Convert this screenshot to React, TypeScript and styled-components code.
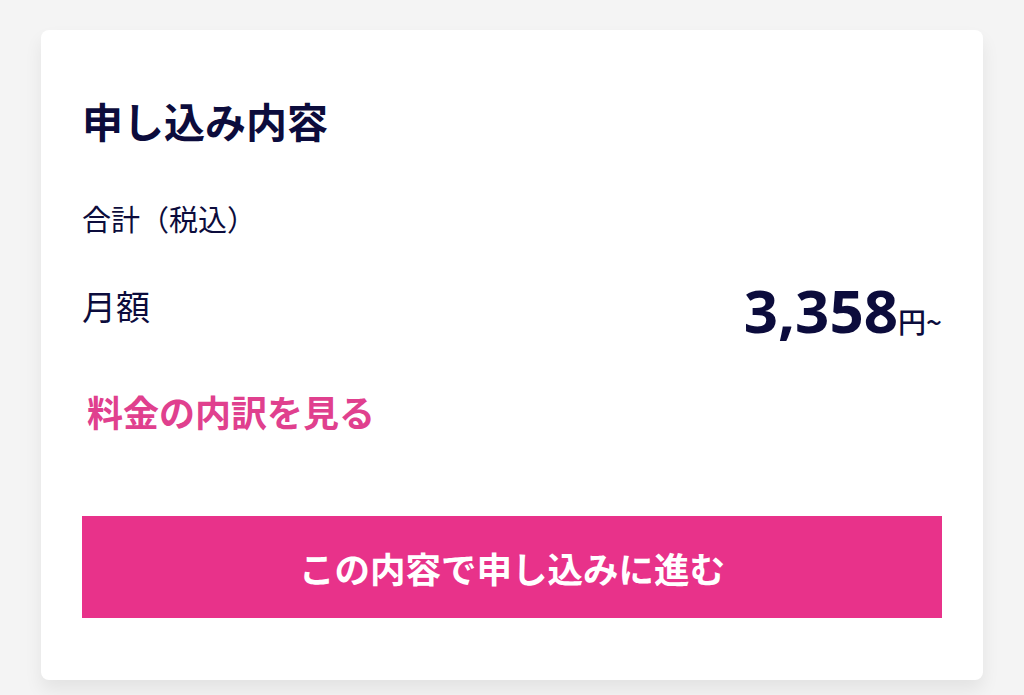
import styled, { createGlobalStyle } from "styled-components";

const GlobalStyle = createGlobalStyle`
  html, body {
    margin: 0;
    padding: 0;
    background: #f4f4f4;
  }
  body {
    font-family: "Noto Sans CJK JP", "Noto Sans", sans-serif;
    color: #0c0c3c;
  }
`;

const Page = styled.div`
  padding: 30px 41px 15px;
`;

const Card = styled.section`
  background: #fff;
  border-radius: 8px;
  box-shadow: 0 10px 18px rgba(0, 0, 0, 0.07);
  padding: 66px 41px 62px;
  display: flex;
  flex-direction: column;
`;

const Title = styled.h2`
  margin: 0;
  font-size: 41px;
  line-height: 48px;
  font-weight: 700;
`;

const TotalLabel = styled.p`
  margin: 54px 0 0;
  font-size: 29px;
  line-height: 40px;
  font-weight: 400;
  font-kerning: none;
  text-spacing-trim: space-all;
`;

const PriceRow = styled.div`
  margin-top: 48px;
  display: flex;
  justify-content: space-between;
  align-items: flex-end;
`;

const PriceLabel = styled.span`
  font-size: 34px;
  line-height: 40px;
  align-self: flex-start;
`;

const Price = styled.div`
  display: flex;
  align-items: baseline;
  font-family: "Noto Sans", sans-serif;
  font-weight: 700;
  margin-top: -11px;

  strong {
    font-size: 60px;
    line-height: 70px;
    font-weight: 700;
  }
  span {
    font-family: "Noto Sans CJK JP", sans-serif;
    font-size: 28px;
    font-weight: 500;
  }
`;

const BreakdownLink = styled.a`
  margin: 43px 0 0 5px;
  font-size: 36px;
  line-height: 46px;
  font-weight: 700;
  color: #e0408e;
  text-decoration: none;
  cursor: pointer;
`;

const ApplyButton = styled.button`
  margin-top: 82px;
  height: 102px;
  width: 100%;
  border: none;
  background: #e8328a;
  color: #fff;
  font-family: "Noto Sans CJK JP", sans-serif;
  font-size: 35.5px;
  font-weight: 700;
  cursor: pointer;
`;

const App = () => {
  return (
    <Page>
      <GlobalStyle />
      <Card>
        <Title>申し込み内容</Title>
        <TotalLabel>合計（税込）</TotalLabel>
        <PriceRow>
          <PriceLabel>月額</PriceLabel>
          <Price>
            <strong>3,358</strong>
            <span>円~</span>
          </Price>
        </PriceRow>
        <BreakdownLink>料金の内訳を見る</BreakdownLink>
        <ApplyButton>この内容で申し込みに進む</ApplyButton>
      </Card>
    </Page>
  );
};

export default App;
